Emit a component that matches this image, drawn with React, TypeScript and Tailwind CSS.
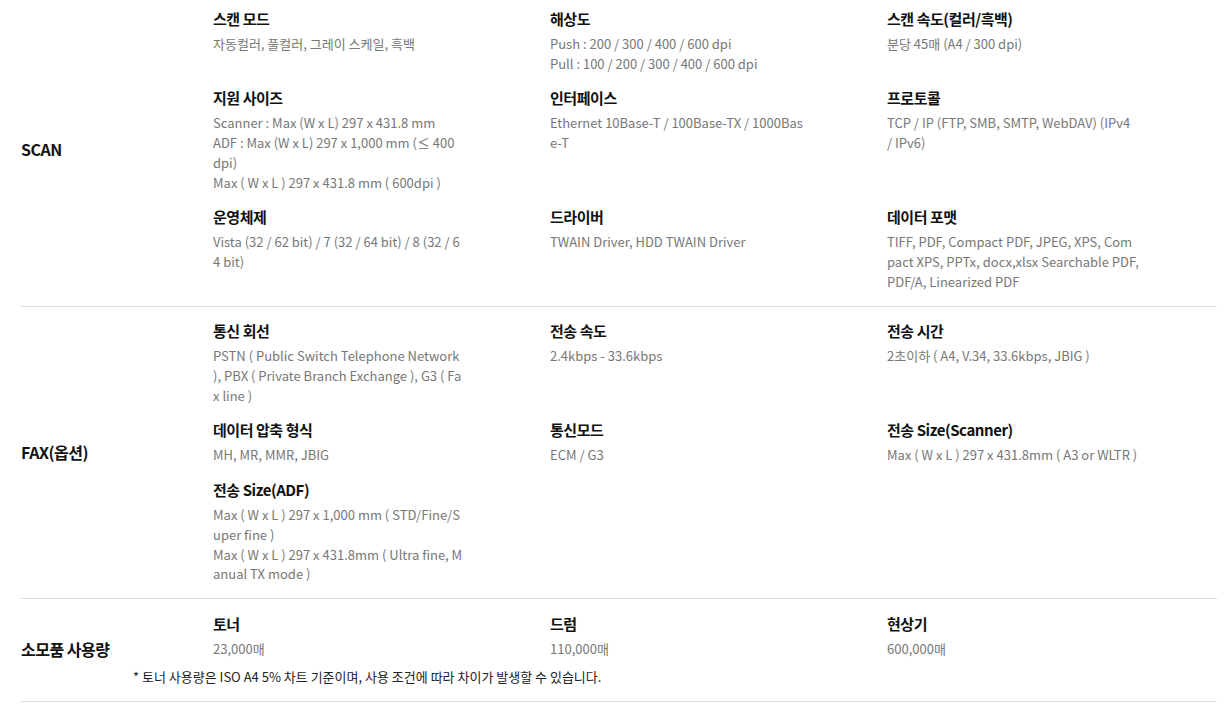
import type { ReactNode } from 'react';

type Spec = { title: string; lines: string[] };

const scan: Spec[] = [
  { title: '스캔 모드', lines: ['자동컬러, 풀컬러, 그레이 스케일, 흑백'] },
  { title: '해상도', lines: ['Push : 200 / 300 / 400 / 600 dpi', 'Pull : 100 / 200 / 300 / 400 / 600 dpi'] },
  { title: '스캔 속도(컬러/흑백)', lines: ['분당 45매 (A4 / 300 dpi)'] },
  {
    title: '지원 사이즈',
    lines: [
      'Scanner : Max (W x L) 297 x 431.8 mm',
      'ADF : Max (W x L) 297 x 1,000 mm (≤ 400',
      'dpi)',
      'Max ( W x L ) 297 x 431.8 mm ( 600dpi )',
    ],
  },
  { title: '인터페이스', lines: ['Ethernet 10Base-T / 100Base-TX / 1000Bas', 'e-T'] },
  { title: '프로토콜', lines: ['TCP / IP (FTP, SMB, SMTP, WebDAV) (IPv4', '/ IPv6)'] },
  { title: '운영체제', lines: ['Vista (32 / 62 bit) / 7 (32 / 64 bit) / 8 (32 / 6', '4 bit)'] },
  { title: '드라이버', lines: ['TWAIN Driver, HDD TWAIN Driver'] },
  {
    title: '데이터 포맷',
    lines: ['TIFF, PDF, Compact PDF, JPEG, XPS, Com', 'pact XPS, PPTx, docx,xlsx Searchable PDF,', 'PDF/A, Linearized PDF'],
  },
];

const fax: Spec[] = [
  {
    title: '통신 회선',
    lines: ['PSTN ( Public Switch Telephone Network', '), PBX ( Private Branch Exchange ), G3 ( Fa', 'x line )'],
  },
  { title: '전송 속도', lines: ['2.4kbps - 33.6kbps'] },
  { title: '전송 시간', lines: ['2초이하 ( A4, V.34, 33.6kbps, JBIG )'] },
  { title: '데이터 압축 형식', lines: ['MH, MR, MMR, JBIG'] },
  { title: '통신모드', lines: ['ECM / G3'] },
  { title: '전송 Size(Scanner)', lines: ['Max ( W x L ) 297 x 431.8mm ( A3 or WLTR )'] },
  {
    title: '전송 Size(ADF)',
    lines: ['Max ( W x L ) 297 x 1,000 mm ( STD/Fine/S', 'uper fine )', 'Max ( W x L ) 297 x 431.8mm ( Ultra fine, M', 'anual TX mode )'],
  },
];

const supplies: Spec[] = [
  { title: '토너', lines: ['23,000매'] },
  { title: '드럼', lines: ['110,000매'] },
  { title: '현상기', lines: ['600,000매'] },
];

function Item({ spec }: { spec: Spec }) {
  return (
    <div>
      <div className="text-[15px] leading-[24px] font-bold text-[#111] tracking-[-0.03em]">{spec.title}</div>
      <div className="mt-[3px] text-[13px] leading-[19.7px] text-[#777]">
        {spec.lines.map((l, i) => (
          <div key={i} className="whitespace-nowrap">
            {l}
          </div>
        ))}
      </div>
    </div>
  );
}

function Section({ label, items, pad, children }: { label: string; items: Spec[]; pad: string; children?: ReactNode }) {
  return (
    <div className={`flex border-b border-[#dddddd] ${pad}`}>
      <div className="w-[192px] shrink-0 flex items-center text-[16px] font-bold text-[#111] tracking-[-0.03em]">
        {label}
      </div>
      <div className="flex-1 flex flex-col">
        <div className="grid grid-cols-[337px_337px_1fr] gap-y-[13px]">
          {items.map((s) => (
            <Item key={s.title} spec={s} />
          ))}
        </div>
        {children}
      </div>
    </div>
  );
}

export default function App() {
  return (
    <div
      className="w-[1228px] h-[710px] bg-white pl-[21px] pr-[11px] overflow-hidden"
      style={{ fontFamily: '"Noto Sans CJK KR", "Noto Sans", sans-serif' }}
    >
      <Section label="SCAN" items={scan} pad="pt-[7px] pb-[15px]" />
      <Section label="FAX(옵션)" items={fax} pad="pt-[12px] pb-[14px]" />
      <Section label="소모품 사용량" items={supplies} pad="pt-[13px] pb-[15px]">
        <div className="-ml-[80px] mt-[9px] text-[13px] leading-[18px] text-[#222]">
          * 토너 사용량은 ISO A4 5% 차트 기준이며, 사용 조건에 따라 차이가 발생할 수 있습니다.
        </div>
      </Section>
    </div>
  );
}
